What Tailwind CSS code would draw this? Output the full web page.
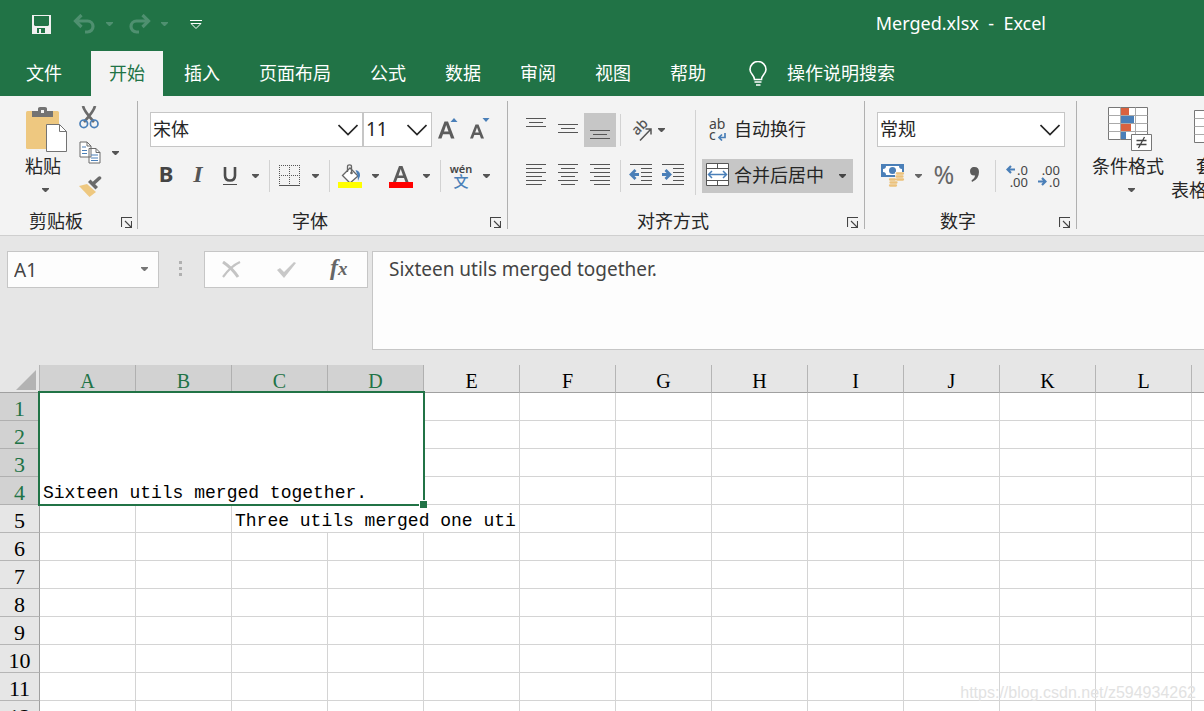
<!DOCTYPE html>
<html lang="zh-CN">
<head>
<meta charset="utf-8">
<title>Merged.xlsx - Excel</title>
<script src="https://cdn.jsdelivr.net/npm/@tailwindcss/browser@4"></script>
</head>
<body class="flex h-screen flex-col overflow-hidden bg-[#e6e6e6] font-['Noto_Sans','Noto_Sans_CJK_SC',sans-serif] text-lg leading-6 text-[#262626]">
<svg class="hidden" aria-hidden="true">
  <symbol id="caret" viewBox="0 0 7 4"><path d="M0 0h7v1L4 4H3L0 1z" fill="currentColor"/></symbol>
  <symbol id="chevron" viewBox="0 0 20 12"><path d="M.5 1 10 10.500 19.500 1" fill="none" stroke="#262626" stroke-width="1.700"/></symbol>
  <symbol id="launcher" viewBox="0 0 11 11"><path d="M.5 10V.5H11M10.500 4v6.500H4M4 4l6 6" fill="none" stroke="#444" stroke-width="1.100"/></symbol>
</svg>

<!-- Title bar -->
<header class="shrink-0 bg-[#217346] text-white">
  <div class="flex h-[51px] items-center pb-[3px]">
    <button aria-label="保存" class="ml-8 size-[19px]"><svg viewBox="0 0 19 19" class="size-[19px]"><path fill="#f0f0f0" fill-rule="evenodd" d="M0 0h19v19H0zM2 1v9l1 1h13l1-1V1zM5 13v5h2v-4h2v4h4v-5z"/></svg></button>
    <button aria-label="撤消" class="ml-[22px] h-5 w-[22px] text-[#4f9070]"><svg viewBox="0 0 22 20" class="h-5 w-[22px]" fill="none" stroke="currentColor"><path stroke-width="3.200" d="M2 7h12.500a5.300 5.300 0 0 1 0 11H12"/><path stroke-width="3.200" d="M8.500 1 2.500 7l6 6"/></svg></button>
    <button aria-label="撤消选项" class="ml-[11px] w-[7px] text-[#4f9070]"><svg class="h-1 w-[7px]"><use href="#caret"/></svg></button>
    <button aria-label="恢复" class="ml-4 h-5 w-[22px] text-[#4f9070]"><svg viewBox="0 0 22 20" class="h-5 w-[22px]" fill="none" stroke="currentColor"><path stroke-width="3.200" d="M20 7H7.500a5.300 5.300 0 0 0 0 11H10"/><path stroke-width="3.200" d="m13.500 1 6 6-6 6"/></svg></button>
    <button aria-label="恢复选项" class="ml-[10px] w-[7px] text-[#4f9070]"><svg class="h-1 w-[7px]"><use href="#caret"/></svg></button>
    <button aria-label="自定义快速访问工具栏" class="ml-[22px] w-3 pt-0.5"><svg viewBox="0 0 12 10" class="h-[10px] w-3" fill="none" stroke="#fff"><path d="M0 .5h12M1 3.500l5 5 5-5z"/></svg></button>
    <h1 class="mr-[158px] ml-auto pb-0.5 whitespace-pre">Merged.xlsx  -  Excel</h1>
  </div>
  <nav class="flex h-[45px] gap-[3px] whitespace-nowrap" aria-label="功能区">
    <button class="w-[88px] pb-0.5">文件</button>
    <button class="bg-[#f3f3f3] px-[18px] pb-0.5 text-[#217346]">开始</button>
    <button class="px-[18px] pb-0.5">插入</button>
    <button class="px-[18px] pb-0.5">页面布局</button>
    <button class="px-[18px] pb-0.5">公式</button>
    <button class="px-[18px] pb-0.5">数据</button>
    <button class="px-[18px] pb-0.5">审阅</button>
    <button class="px-[18px] pb-0.5">视图</button>
    <button class="px-[18px] pb-0.5">帮助</button>
    <button class="ml-[22px] flex items-center gap-5">
      <svg viewBox="0 0 18 25" class="h-[25px] w-[18px]" fill="none" stroke="#fff" stroke-width="1.600"><path d="M5.500 18.500C5.500 14 1 13 1 8.500a8 8 0 0 1 16 0c0 4.500-4.500 5.500-4.500 10zM5.500 21h7M7 24h4.500"/></svg>
      <span class="pb-0.5">操作说明搜索</span>
    </button>
  </nav>
</header>

<!-- Ribbon -->
<main class="contents">
<div class="flex shrink-0 overflow-hidden border-b border-[#cfcfcf] bg-[#f3f3f3] pt-[5px] pb-[6px] whitespace-nowrap">
  <section class="flex h-32 w-[138px] shrink-0 flex-col border-r border-[#b0b0b0]">
    <div class="flex grow">
      <button class="ml-[25px] flex w-11 flex-col items-center pt-[6px]">
        <svg viewBox="0 0 42 46" class="h-[46px] w-[42px]"><rect y="4" width="33" height="38" rx="1.500" fill="#eec880"/><path d="M6 4h6V1.500Q12 0 14 0h5q2 0 2 1.500V4h6v6H6z" fill="#737373"/><path d="M15 3h3v3h-3z" fill="#f3f3f3"/><path d="M20.500 17.500h13l7 7v20h-20z" fill="#fff" stroke="#737373"/><path d="M33.500 17.500v7h7" fill="none" stroke="#737373"/></svg>
        <span class="mr-2 -mt-px leading-7">粘贴</span>
        <svg class="mt-2 mr-1 h-1 w-[7px] text-[#555]"><use href="#caret"/></svg>
      </button>
      <div class="ml-[10px] flex flex-col pt-[5px]">
        <button aria-label="剪切" class="h-[23px] w-5"><svg viewBox="0 0 20 23" class="h-[23px] w-5" fill="none"><path d="M4 0q1 5 11 16M16 0q-1 5-11 16" stroke="#6a6a6a" stroke-width="2.700"/><circle cx="4.800" cy="17.800" r="3.800" stroke="#4a7fb8" stroke-width="1.700"/><circle cx="15.200" cy="17.800" r="3.800" stroke="#4a7fb8" stroke-width="1.700"/></svg></button>
        <button aria-label="复制" class="mt-3 flex items-center gap-[11px]"><svg viewBox="0 0 22 23" class="h-[23px] w-[22px]"><path d="M1 1h7l4 4v11H1zM10 7.500h7l4 4V22H10z" fill="#fff" stroke="#6a6a6a"/><path d="M8 1v4h4M17 7.500v4h4" fill="none" stroke="#6a6a6a"/><path d="M3 6h4M3 9.500h5M3 12.500h5M12 14h7M12 17h7M12 19.500h7" stroke="#4a7fb8" stroke-width="1.200"/></svg><svg class="h-1 w-[7px] text-[#555]"><use href="#caret"/></svg></button>
        <button aria-label="格式刷" class="mt-3 h-[22px] w-6"><svg viewBox="0 0 24 22" class="h-[22px] w-6"><path d="m0 10 8-2 9 8-6.500 5z" fill="#eec880"/><path d="m9 6 2.500-2.500L19 11l-2.500 2.500z" fill="#6a6a6a"/><path d="m15.500 6.500 5-4.500" stroke="#6a6a6a" stroke-width="3.500" stroke-linecap="round"/></svg></button>
      </div>
    </div>
    <div class="flex h-[14px] items-center leading-[14px]"><h2 class="ml-[29px] pb-0.5">剪贴板</h2><button aria-label="剪贴板设置" class="mr-[5px] ml-auto"><svg class="size-[11px]"><use href="#launcher"/></svg></button></div>
  </section>

  <section class="flex h-32 w-[370px] shrink-0 flex-col border-r border-[#b0b0b0] pt-[11px]">
    <div class="flex h-[35px] pl-3">
      <label class="relative w-[213px]"><select aria-label="字体" class="h-full w-full appearance-none border border-[#c6c6c6] bg-white pb-0.5 pl-0.5 outline-none"><option>宋体</option></select><svg class="pointer-events-none absolute top-3 right-[5px] h-3 w-5"><use href="#chevron"/></svg></label>
      <label class="relative w-[69px]"><select aria-label="字号" class="h-full w-full appearance-none border border-[#c6c6c6] bg-white pb-0.5 pl-0.5 text-[19px] outline-none"><option>11</option></select><svg class="pointer-events-none absolute top-3 right-[5px] h-3 w-5"><use href="#chevron"/></svg></label>
      <button aria-label="增大字号" class="ml-[6px] flex w-5 items-start pt-[6px]"><svg viewBox="0 0 20 21" class="h-[21px] w-5"><path fill="#5c5c5c" fill-rule="evenodd" d="M0 20.500 6.500 3.500h3.500L16.500 20.500h-3.500l-1.500-4.200H5L3.500 20.500zM6 13.500h4.500L8.200 7z"/><path d="M12.500 4h7L16 0z" fill="#4a7fb8"/></svg></button>
      <button aria-label="减小字号" class="ml-3 flex w-5 items-start pt-[6px]"><svg viewBox="0 0 20 21" class="h-[21px] w-5"><path fill="#5c5c5c" fill-rule="evenodd" d="M0 20.500 5.500 6.500h3L14 20.500h-3l-1.300-3.500H4.300L3 20.500zM5.200 14.600h3.600L7 9.600z"/><path d="M12.500 0h7L16 4z" fill="#4a7fb8"/></svg></button>
    </div>
    <div class="mt-[11px] flex h-[35px] items-center text-[#555]">
      <button aria-label="加粗" class="ml-[18px] w-5 pb-[5px] text-[22px] font-bold text-[#444]">B</button>
      <button aria-label="倾斜" class="ml-3 w-5 pb-[3px] font-['Liberation_Serif',serif] text-2xl font-bold text-[#555] italic">I</button>
      <button aria-label="下划线" class="ml-3 flex h-6 w-5 items-start justify-center"><svg viewBox="0 0 14 20" class="mt-[3px] h-5 w-[14px]" fill="none" stroke="#4c4c4c"><path stroke-width="2.600" d="M2 0v8.500q0 5 5 5t5-5V0"/><path d="M0 17.500h14"/></svg></button>
      <button aria-label="下划线选项" class="ml-3"><svg class="h-1 w-[7px]"><use href="#caret"/></svg></button>
      <i class="ml-[10px] h-8 w-px bg-[#d2d2d2]"></i>
      <button aria-label="边框" class="ml-[9px]"><svg viewBox="0 0 21 21" class="size-[21px]" fill="none" stroke="#555"><path stroke-dasharray="1 1" d="M0 .5h21M0 10.500h21M.5 0v20M10.500 0v20M20.500 0v20"/><path d="M0 20.500h21"/></svg></button>
      <button aria-label="边框选项" class="ml-3"><svg class="h-1 w-[7px]"><use href="#caret"/></svg></button>
      <i class="ml-[10px] h-8 w-px bg-[#d2d2d2]"></i>
      <button aria-label="填充颜色" class="ml-2"><svg viewBox="0 0 24 24" class="h-6 w-6"><path d="M4.500 11.500 12 4l8 8-8 7z" fill="#fff" stroke="#666" stroke-width="1.300"/><path d="M9.500 8V2.500Q9.500.8 11.500.8t2 1.700V9" fill="none" stroke="#666" stroke-width="1.300"/><circle cx="13.500" cy="9" r="1.300" fill="#666"/><path d="M17.500 6q5 1 4.500 6l-2 5-.5-6z" fill="#4a7fb8"/><path d="M0 18h24v6H0z" fill="#ff0"/></svg></button>
      <button aria-label="填充颜色选项" class="ml-[10px]"><svg class="h-1 w-[7px]"><use href="#caret"/></svg></button>
      <button aria-label="字体颜色" class="ml-[10px]"><svg viewBox="0 0 24 24" class="h-6 w-6"><path fill="#5c5c5c" fill-rule="evenodd" d="M4 18 10 2h3.500L19.500 18h-3l-1.500-4H8.500L7 18zM9.500 11.500h4.500L11.700 5z"/><path d="M0 18h24v6H0z" fill="red"/></svg></button>
      <button aria-label="字体颜色选项" class="ml-[10px]"><svg class="h-1 w-[7px]"><use href="#caret"/></svg></button>
      <i class="ml-[10px] h-8 w-px bg-[#d2d2d2]"></i>
      <button class="ml-2 flex w-6 flex-col items-center text-[#444]"><span class="text-[11px] leading-[11px] font-semibold">wén</span><span class="text-[15px] leading-[15px] font-medium text-[#4a7fb8]">文</span></button>
      <button aria-label="拼音选项" class="ml-[10px]"><svg class="h-1 w-[7px]"><use href="#caret"/></svg></button>
    </div>
    <div class="mt-auto flex h-[14px] items-center leading-[14px]"><h2 class="ml-[154px] pb-0.5">字体</h2><button aria-label="字体设置" class="mr-[6px] ml-auto"><svg class="size-[11px]"><use href="#launcher"/></svg></button></div>
  </section>

  <section class="flex h-32 w-[357px] shrink-0 flex-col border-r border-[#b0b0b0] pt-[9px]">
    <div class="flex pl-3">
      <div class="flex flex-col gap-3 pt-[3px]">
        <div class="flex h-[34px] items-center">
          <button aria-label="顶端对齐" class="h-[34px] w-8"><svg viewBox="0 0 32 34" class="h-[34px] w-8" stroke="#555"><path d="M6 5.500h20M9 9.500h14M6 13.500h20"/></svg></button>
          <button aria-label="垂直居中" class="h-[34px] w-8"><svg viewBox="0 0 32 34" class="h-[34px] w-8" stroke="#555"><path d="M6 11.500h20M9 15.500h14M6 19.500h20"/></svg></button>
          <button aria-label="底端对齐" class="h-[34px] w-8 bg-[#c6c6c6]"><svg viewBox="0 0 32 34" class="h-[34px] w-8" stroke="#555"><path d="M6 17.500h20M9 21.500h14M6 25.500h20"/></svg></button>
          <i class="ml-1 h-8 w-px bg-[#d2d2d2]"></i>
          <button aria-label="方向" class="ml-[10px] flex items-center gap-[6px] text-[#555]"><svg viewBox="0 0 21 21" class="size-[21px] overflow-visible"><text x="6" y="16" transform="rotate(-45 6 16)" font-family="Noto Sans" font-size="14" font-weight="500" fill="#555">ab</text><path d="M9 20.500 20 9M14.500 9H20v5.500" fill="none" stroke="#555" stroke-width="1.500"/></svg><svg class="h-1 w-[7px]"><use href="#caret"/></svg></button>
        </div>
        <div class="flex h-[34px] items-center">
          <button aria-label="左对齐" class="h-[34px] w-8"><svg viewBox="0 0 32 34" class="h-[34px] w-8" stroke="#555"><path d="M6 5.500h20M6 9.500h16M6 13.500h20M6 17.500h16M6 21.500h20M6 25.500h16"/></svg></button>
          <button aria-label="居中" class="h-[34px] w-8"><svg viewBox="0 0 32 34" class="h-[34px] w-8" stroke="#555"><path d="M6 5.500h20M9 9.500h14M6 13.500h20M9 17.500h14M6 21.500h20M9 25.500h14"/></svg></button>
          <button aria-label="右对齐" class="h-[34px] w-8"><svg viewBox="0 0 32 34" class="h-[34px] w-8" stroke="#555"><path d="M6 5.500h20M10 9.500h16M6 13.500h20M10 17.500h16M6 21.500h20M10 25.500h16"/></svg></button>
          <i class="ml-1 h-8 w-px bg-[#d2d2d2]"></i>
          <button aria-label="减少缩进量" class="ml-2 h-[34px] w-6"><svg viewBox="0 0 24 34" class="h-[34px] w-6" fill="none" stroke="#555"><path d="M1 5.500h22M12 9.500h11M12 13.500h11M12 17.500h11M12 21.500h11M1 25.500h22"/><path stroke="#4a7fb8" stroke-width="2.800" d="M2 15.500h8M6.500 11 2 15.500 6.500 20"/></svg></button>
          <button aria-label="增加缩进量" class="ml-2 h-[34px] w-6"><svg viewBox="0 0 24 34" class="h-[34px] w-6" fill="none" stroke="#555"><path d="M1 5.500h22M12 9.500h11M12 13.500h11M12 17.500h11M12 21.500h11M1 25.500h22"/><path stroke="#4a7fb8" stroke-width="2.800" d="M1 15.500h8M4.500 11 9 15.500 4.500 20"/></svg></button>
        </div>
      </div>
      <i class="ml-[10px] h-[85px] w-px bg-[#d2d2d2]"></i>
      <div class="ml-[6px] flex flex-col gap-3 pt-[3px]">
        <button class="flex h-[34px] items-center gap-[7px] pb-0.5 pl-[7px]">
          <span class="grid w-[18px] text-left text-sm leading-[11px] text-[#444]"><span>ab</span><span class="flex items-center gap-0.5">c<svg viewBox="0 0 8 8" class="mt-1 size-2" fill="none" stroke="#4a7fb8" stroke-width="1.700"><path d="M7 0v4.500H1M4 1.500l-3 3 3 3"/></svg></span></span>
          <span>自动换行</span>
        </button>
        <button class="flex h-[34px] w-[151px] items-center bg-[#c6c6c6] pl-1">
          <svg viewBox="0 0 23 23" class="mb-[3px] size-[23px]" fill="none"><path fill="#fff" stroke="#555" d="M.5.5h22v22H.5zM.5 5.500h22M.5 17.500h22M11.500.5v5M11.500 17.500v5"/><path stroke="#4a7fb8" stroke-width="1.500" d="M2.500 11.500h18M6 8l-3.500 3.500L6 15M17 8l3.500 3.500L17 15"/></svg>
          <span class="ml-[5px] pb-0.5">合并后居中</span>
          <svg class="ml-[15px] h-1 w-[7px] text-[#444]"><use href="#caret"/></svg>
        </button>
      </div>
    </div>
    <div class="mt-auto flex h-[14px] items-center leading-[14px]"><h2 class="ml-[129px] pb-0.5">对齐方式</h2><button aria-label="对齐设置" class="mr-[6px] ml-auto"><svg class="size-[11px]"><use href="#launcher"/></svg></button></div>
  </section>

  <section class="flex h-32 w-[212px] shrink-0 flex-col border-r border-[#b0b0b0] pt-[11px]">
    <label class="relative ml-3 h-[35px] w-[188px]"><select aria-label="数字格式" class="h-full w-full appearance-none border border-[#c6c6c6] bg-white pb-0.5 pl-0.5 outline-none"><option>常规</option></select><svg class="pointer-events-none absolute top-3 right-[5px] h-3 w-5"><use href="#chevron"/></svg></label>
    <div class="mt-[11px] flex h-[35px] items-center text-[#666]">
      <button aria-label="会计数字格式" class="ml-4"><svg viewBox="0 0 24 23" class="h-[23px] w-6"><path d="M0 0h23v13H0z" fill="#4a7fb8"/><path d="M5 2h13q0 3 3 3v3q-3 0-3 3H5q0-3-3-3V5q3 0 3-3" fill="#fff"/><circle cx="11.500" cy="6.500" r="3.500" fill="#4a7fb8"/><path d="M14 8h10v10H14zM7 14h10v9H7z" fill="#f3f3f3"/><g fill="none" stroke="#ecc27c" stroke-width="2.300" stroke-linecap="round"><path d="M16 9.500h6M15.500 12.500h6M16 15.500h6M9 15.500h5M9.500 18.500h6M9 21.500h6"/></g></svg></button>
      <button aria-label="会计格式选项" class="ml-[10px]"><svg class="h-1 w-[7px]"><use href="#caret"/></svg></button>
      <button aria-label="百分比样式" class="ml-[10px] w-6 pb-[3px] text-[25px]">%</button>
      <button aria-label="千位分隔样式" class="ml-[14px]"><svg viewBox="0 0 10 15" class="mb-0.5 h-[15px] w-[10px]"><path d="M0 4a4 4 0 0 1 4.500-4Q9 0 9 5q0 7-7 10l-.5-1.500Q5 11 5.200 8.500 0 9 0 4" fill="#5c5c5c"/></svg></button>
      <i class="ml-[15px] h-8 w-px bg-[#d2d2d2]"></i>
      <button aria-label="增加小数位数" class="ml-[9px] grid w-[23px] justify-items-end text-[13px] leading-3 text-[#444]"><span class="flex items-center gap-0.5"><svg viewBox="0 0 9 9" class="size-[9px]" fill="none" stroke="#4a7fb8" stroke-width="2.200"><path d="M1 4.500h8M5 1 1.500 4.500 5 8"/></svg>.0</span><span>.00</span></button>
      <button aria-label="减少小数位数" class="ml-[9px] grid w-[23px] justify-items-end text-[13px] leading-3 text-[#444]"><span>.00</span><span class="flex items-center gap-0.5"><svg viewBox="0 0 9 9" class="size-[9px]" fill="none" stroke="#4a7fb8" stroke-width="2.200"><path d="M0 4.500h8M4 1l3.500 3.500L4 8"/></svg>.0</span></button>
    </div>
    <div class="mt-auto flex h-[14px] items-center leading-[14px]"><h2 class="ml-[75px] pb-0.5">数字</h2><button aria-label="数字设置" class="mr-[6px] ml-auto"><svg class="size-[11px]"><use href="#launcher"/></svg></button></div>
  </section>

  <section class="flex h-32 shrink-0 pt-[6px]">
    <button class="ml-[11px] flex w-20 flex-col items-center">
      <svg viewBox="0 0 44 44" class="ml-[3px] size-11"><path d="M.5.500h39v32H.5z" fill="#fff" stroke="#777"/><path d="M.5 8.500h39M.5 16.500h39M.5 24.500h39M12.500.5v32M27.500.5v32" stroke="#aaa" fill="none"/><path d="M13 1h8v7h-8zM13 17h10v7H13z" fill="#d9623f"/><path d="M13 9h13v7H13zM13 25h5v7h-5z" fill="#4a7fb8"/><path d="M23.500 27.500h20v16h-20z" fill="#fff" stroke="#777"/><path d="M28.500 33.500h10M28.500 37.500h10M36.500 30l-6 11" stroke="#444" stroke-width="1.300"/></svg>
      <span class="mt-px leading-7">条件格式</span>
      <svg class="mt-2 ml-[7px] h-1 w-[7px] text-[#555]"><use href="#caret"/></svg>
    </button>
    <button class="ml-[3px] flex w-[86px] flex-col items-center">
      <svg viewBox="0 0 44 44" class="ml-1 size-11"><path d="M.5 3.500h39v32H.5z" fill="#fff" stroke="#777"/><path d="M.5 11.500h39M.5 19.500h39M.5 27.500h39M13.500 3.500v32M26.500 3.500v32" stroke="#aaa" fill="none"/></svg>
      <span class="mt-[3px] leading-6">套用</span>
      <span class="flex items-center gap-[7px] leading-6">表格格式<svg class="h-1 w-[7px] text-[#555]"><use href="#caret"/></svg></span>
    </button>
  </section>
</div>

<!-- Formula bar -->
<div class="flex h-[129px] shrink-0 items-start pt-[15px]">
  <label class="relative ml-[7px] h-[37px] w-[152px]"><input aria-label="名称框" value="A1" class="h-full w-full border border-[#c6c6c6] bg-[#fdfdfd] pl-[6px] text-[19px] text-[#444] outline-none"><svg class="pointer-events-none absolute top-4 right-[11px] h-1 w-[7px] text-[#777]"><use href="#caret"/></svg></label>
  <svg viewBox="0 0 3 15" class="mt-[10px] ml-5 h-[15px] w-[3px] shrink-0" fill="#b0b0b0"><path d="M0 0h3v3H0zM0 6h3v3H0zM0 12h3v3H0z"/></svg>
  <div class="ml-[22px] flex h-[37px] w-[164px] shrink-0 items-center border border-[#c6c6c6] bg-[#fdfdfd]">
    <button aria-label="取消" class="ml-[17px]"><svg viewBox="0 0 19 17" class="h-[17px] w-[19px]" fill="none" stroke="#c4c4c4"><path stroke-width="3" d="M1 1q9 6 15 15"/><path stroke-width="2.200" d="M18 1Q9 5 1 16"/></svg></button>
    <button aria-label="输入" class="ml-9"><svg viewBox="0 0 19 16" class="h-4 w-[19px]"><path d="m0 8 3-2 4 4L17 0l2 1L7 16z" fill="#c8c8c8"/></svg></button>
    <button aria-label="插入函数" class="ml-[34px] flex pb-0.5 font-['Liberation_Serif',serif] leading-7 font-bold text-[#666] italic"><span class="text-2xl leading-7">f</span><span class="text-[19px] leading-8">x</span></button>
  </div>
  <textarea aria-label="编辑栏" class="ml-1 h-[99px] min-w-0 grow resize-none border border-r-0 border-[#c6c6c6] bg-[#fdfdfd] px-4 pt-[5px] text-[19px] leading-6 text-[#444] outline-none">Sixteen utils merged together.</textarea>
</div>

<!-- Worksheet -->
<div class="relative min-h-0 grow overflow-hidden bg-white">
  <table class="w-[1288px] table-fixed border-separate border-spacing-0 font-['Liberation_Mono',monospace] text-black">
    <thead><tr id="cols" class="h-7"><th class="w-10 border-r border-b border-r-[#b5b5b5] border-b-[#a0a0a0] bg-[#e6e6e6] p-0"><svg viewBox="0 0 20 20" class="mt-0.5 mr-[3px] ml-auto size-5"><path d="M20 0v20H0z" fill="#b3b3b3"/></svg></th></tr></thead>
    <tbody id="rows"></tbody>
  </table>
  <div class="pointer-events-none absolute right-2 bottom-[6px] font-['Liberation_Sans',sans-serif] text-base text-[#e2e2e2]">https://blog.csdn.net/z594934262</div>
</div>
</main>
<script>
  const LETTERS = 'ABCDEFGHIJKLM';
  const head = document.getElementById('cols');
  for (const [i, letter] of [...LETTERS].entries()) {
    const th = document.createElement('th');
    th.scope = 'col';
    th.className = i < 4
      ? "border-r border-b border-r-[#b0b0b0] border-b-[#a0a0a0] bg-[#d2d2d2] p-0 pt-1 font-['Liberation_Serif',serif] text-xl leading-5 font-normal text-[#217346]"
      : "border-r border-b border-r-[#b5b5b5] border-b-[#a0a0a0] bg-[#e6e6e6] p-0 pt-1 font-['Liberation_Serif',serif] text-xl leading-5 font-normal";
    th.textContent = letter;
    head.append(th);
  }
  const body = document.getElementById('rows');
  for (let r = 1; r <= 12; r++) {
    const tr = document.createElement('tr');
    tr.className = 'h-7';
    const th = document.createElement('th');
    th.scope = 'row';
    th.className = r < 5
      ? "border-r border-b border-[#b0b0b0] bg-[#d2d2d2] p-0 pt-1 font-['Liberation_Serif',serif] text-[22px] leading-5 font-normal text-[#217346]"
      : "border-r border-b border-r-[#a0a0a0] border-b-[#b5b5b5] bg-[#e6e6e6] p-0 pt-1 font-['Liberation_Serif',serif] text-[22px] leading-5 font-normal";
    th.textContent = r;
    tr.append(th);
    for (let c = 0; c < 13; c++) {
      if (r < 5 && c < 4 && !(r === 1 && c === 0)) continue;
      if (r === 5 && (c === 3 || c === 4)) continue;
      const td = document.createElement('td');
      td.className = 'border-r border-b border-[#d4d4d4] p-0';
      if (r === 1 && c === 0) {
        td.colSpan = 4;
        td.rowSpan = 4;
        td.className = 'relative border-r border-b border-[#d4d4d4] p-0 pl-[3px] align-bottom leading-[22px] whitespace-nowrap';
        td.innerHTML = 'Sixteen utils merged together.<span class="absolute -top-0.5 -right-0.5 -bottom-0.5 -left-0.5 border-2 border-[#217346]"></span><span class="absolute -right-1 -bottom-1 size-2 border-t border-l border-white bg-[#217346]"></span>';
      } else if (r === 5 && c === 2) {
        td.colSpan = 3;
        td.className = 'overflow-hidden border-r border-b border-[#d4d4d4] p-0 pt-1 pl-[3px] leading-[22px] whitespace-nowrap';
        td.textContent = 'Three utils merged one uti';
      }
      tr.append(td);
    }
    body.append(tr);
  }
</script>
</body>
</html>
